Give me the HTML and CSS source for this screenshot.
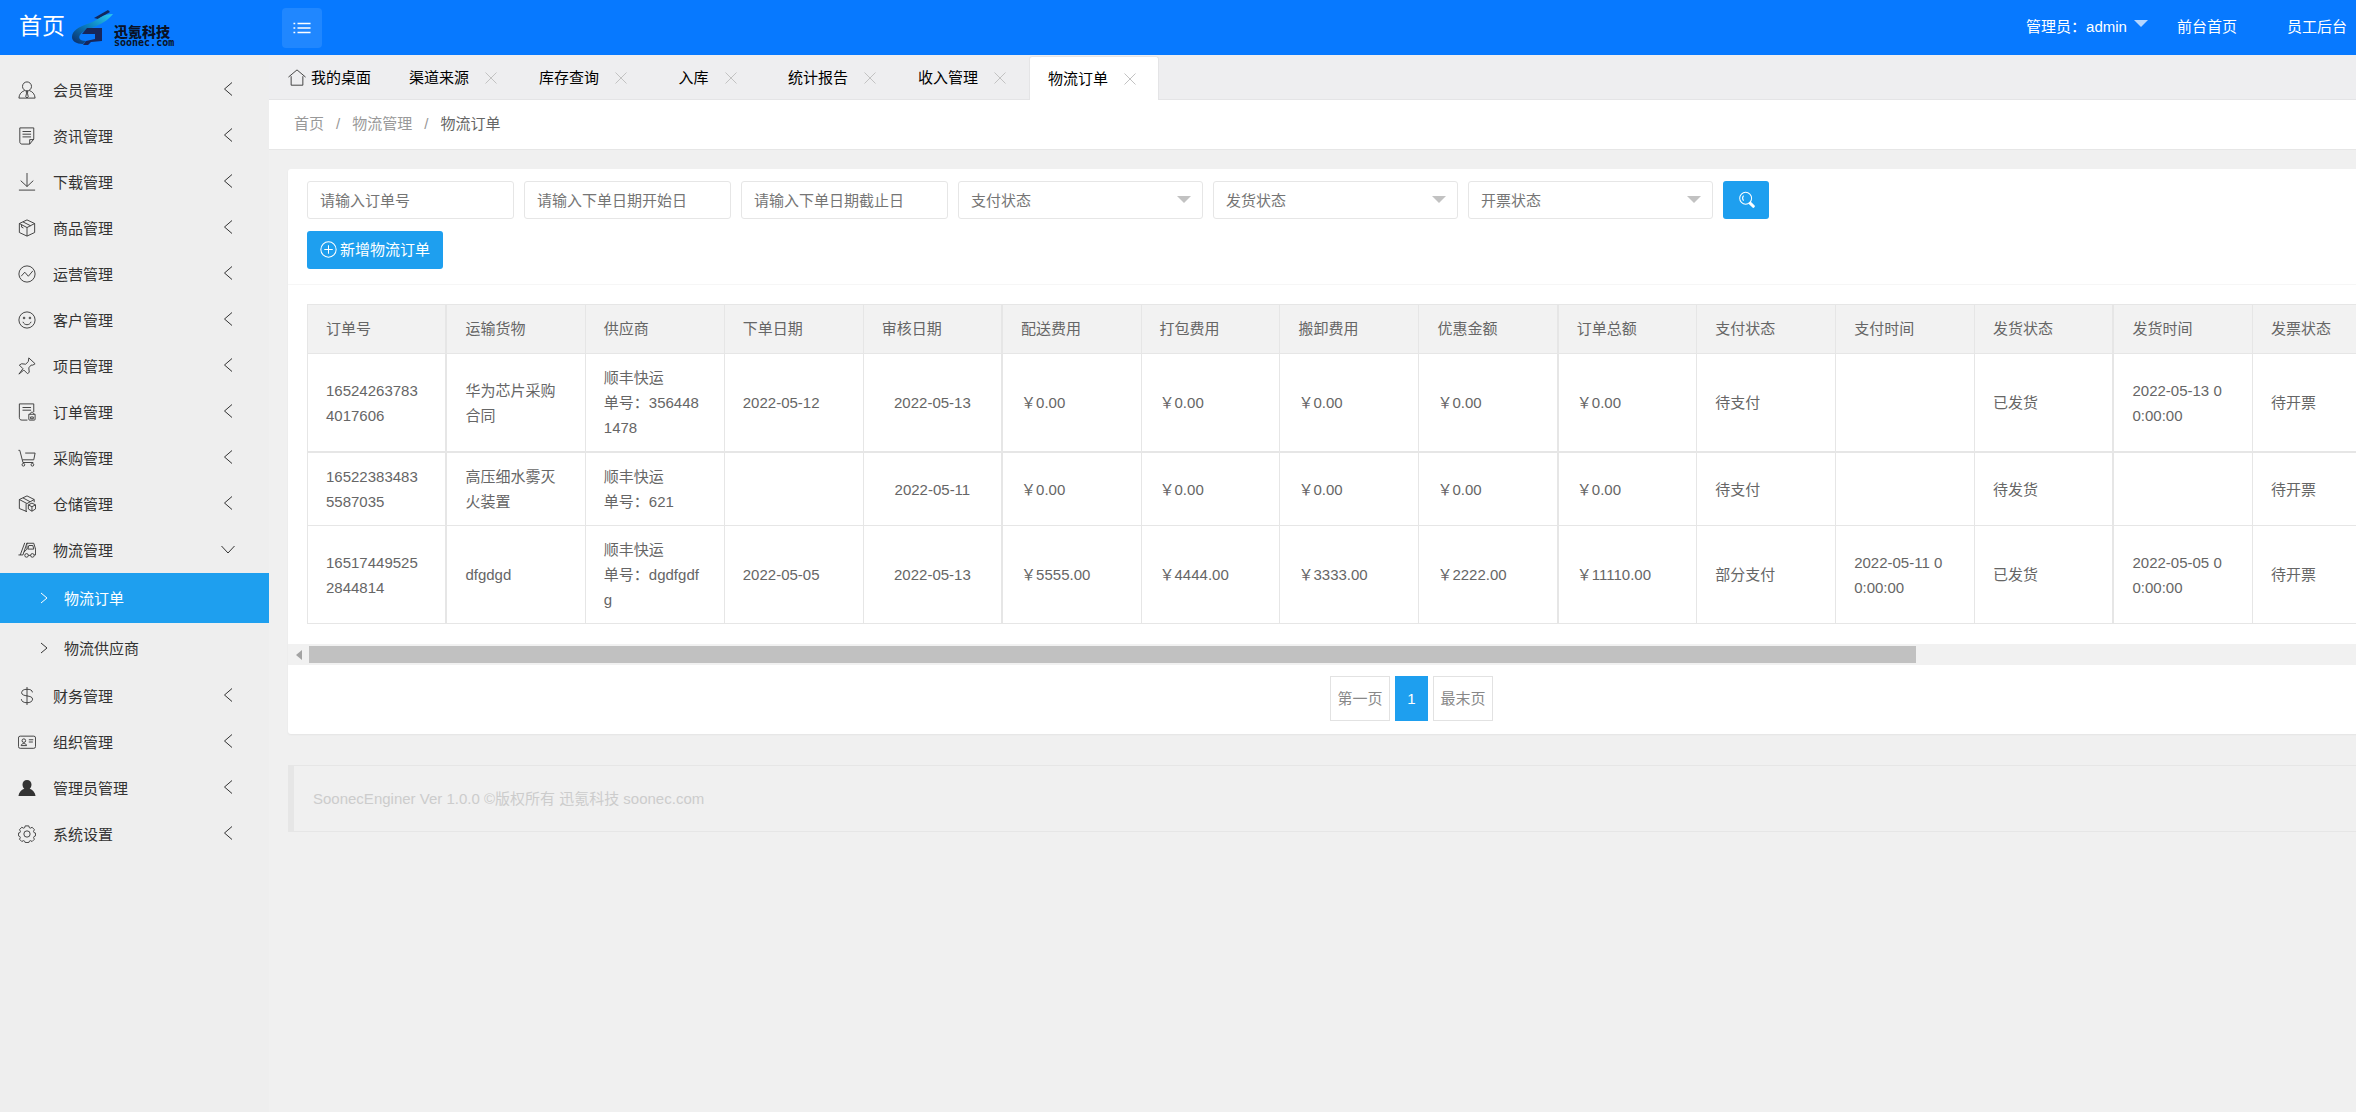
FILE: index.html
```html
<!DOCTYPE html>
<html lang="zh-CN">
<head>
    <meta charset="UTF-8">
    <meta name="viewport" content="width=device-width, initial-scale=1.0">
    <title>物流订单</title>
    <link rel="stylesheet" href="styles.css">
</head>
<body>
    <svg class="sprite" aria-hidden="true">
        <symbol id="i-member" viewBox="0 0 20 20"><circle cx="10" cy="6" r="5"/><path d="M7.4 10.6C3.6 12 1.4 14.4 1 19h18c-.4-4.600-2.600-7-6.400-8.400M9 11.500h2l-.5 2 .9 4-1.400 1.300-1.400-1.300.9-4z"/></symbol>
        <symbol id="i-news" viewBox="0 0 20 20"><path d="M2 1h15.500v12.500L13 19H4.500C3 19 2 18 2 16.500zM13 19v-5h4.500M5 5h9.500M5 8h9.500M5 11h9.500"/></symbol>
        <symbol id="i-down" viewBox="0 0 20 20"><path d="M10 0v15M3 8.500l7 6.500 7-6.500M1 19h18"/></symbol>
        <symbol id="i-box" viewBox="0 0 20 20"><path d="M10 1l8.500 4v10L10 19l-8.500-4V5zM1.500 5L10 9.500 18.500 5M10 9.500V19M5.500 3.200L14 7.500M4 6.500V9l2 1"/></symbol>
        <symbol id="i-chart" viewBox="0 0 20 20"><circle cx="10" cy="10" r="9"/><path d="M3.500 12.500L7.500 8l4 4.500 5-6"/></symbol>
        <symbol id="i-smile" viewBox="0 0 20 20"><circle cx="10" cy="10" r="9"/><path d="M5.500 12c1.500 4.300 7.500 4.300 9 0M6 7h1.500v1.500H6zM12.500 7H14v1.500h-1.500z"/></symbol>
        <symbol id="i-pin" viewBox="0 0 20 20"><path d="M12 1l7 6.500-2.500 1.500h-2l-2.500 3 .5 5-2 1.500-4-4L1 19l4.500-6L1.500 9 4 7.500l4.500.5L11.500 5z"/></symbol>
        <symbol id="i-order" viewBox="0 0 20 20"><path d="M10.500 19H4.500C2.500 19 1.500 18 1.500 16V1h16v9M5 5h9.500M5 8h9.500M12 12.500h7V18q0 1-1 1h-5q-1 0-1-1zM13.500 12.500c0-3 4-3 4 0M14 15.500h3v2h-3z"/></symbol>
        <symbol id="i-cart" viewBox="0 0 20 20"><path d="M0.500 1.500H2L5.500 15h11.500M8 4.500h11L17.500 12H5"/><circle cx="6" cy="17.500" r="1.500"/><circle cx="16" cy="17.500" r="1.500"/></symbol>
        <symbol id="i-store" viewBox="0 0 20 20"><path d="M10 18.500L1.500 15V5L10 1l8 4v3M1.500 5L10 9.500 18 5M9 9.500v9M5.500 3.200L13.500 7.500M15.500 9l4 2v4.500l-4 2.500-4-2.500V11zM11.500 11l4 2 4-2M15.500 13v5"/></symbol>
        <symbol id="i-truck" viewBox="0 0 20 20"><path d="M7.500 2L2.500 15.500M10 2L5.500 15.500H0.500M10 4V2.500h7.500L19.500 9v6.500h-1.500M10 5v4L6.500 12.500M12 5h4.500l1 4h-6.500zM11.500 16h2.500"/><circle cx="9.500" cy="16" r="2"/><circle cx="16" cy="16" r="2"/></symbol>
        <symbol id="i-money" viewBox="0 0 20 20"><path d="M16 6c0-2.500-2.500-3.500-6-3.500S4 4 4 6.300c0 5 12.200 2.200 12.200 7.200 0 2.500-2.700 4-6.200 4s-6.300-1.500-6.300-4M10 0v20"/></symbol>
        <symbol id="i-card" viewBox="0 0 20 20"><rect x="0.500" y="3.500" width="19" height="13.500" rx="2"/><path d="M3.500 14c0-3 6-3 6 0zM12 7.500h5M12 10h4.500"/><circle cx="6.500" cy="8.500" r="2"/></symbol>
        <symbol id="i-user" viewBox="0 0 20 20"><path d="M10 1c3 0 5 2.200 5 5 0 2-.8 3.800-2 4.800 3.500 1.200 6 4 6.500 8.200H.5C1 14.800 3.500 12 7 10.800 5.800 9.800 5 8 5 6c0-2.800 2-5 5-5z" fill="currentColor" stroke="none"/></symbol>
        <symbol id="i-gear" viewBox="0 0 20 20"><circle cx="10" cy="10" r="3.500"/><path d="M8 1h4l.6 2 1.200.500L15.700 2.500l2.500 2.700-1 1.900.6 1.400L19.500 9v3l-1.700.8-.5 1.200.9 1.800-2.500 2.500-1.900-.9-1.200.6L12 19.500H8l-.6-1.500-1.300-.6-1.900.9-2.500-2.500.9-1.800-.5-1.200L.5 12V9l1.700-.5.5-1.400-1-1.900 2.500-2.700 1.900 1L7.400 3z"/></symbol>
        <symbol id="i-left" viewBox="0 0 14 14"><path d="M11 0.500L3.500 7l7.500 6.500"/></symbol>
        <symbol id="i-open" viewBox="0 0 14 14"><path d="M0.500 4L7 11l6.500-7"/></symbol>
        <symbol id="i-right" viewBox="0 0 14 14"><path d="M4 2l6 5-6 5"/></symbol>
        <symbol id="i-close" viewBox="0 0 20 20"><path d="M4.500 4.500l11 11M15.500 4.500l-11 11"/></symbol>
        <symbol id="i-home" viewBox="0 0 20 20"><path d="M0.500 9L10 1l9.500 8M3.500 8v10h13V8"/></symbol>
        <symbol id="i-add" viewBox="0 0 20 20"><circle cx="10" cy="10" r="9"/><path d="M10 5v10M5 10h10"/></symbol>
        <symbol id="i-search" viewBox="0 0 20 20"><circle cx="9" cy="8.500" r="7"/><path d="M6.500 5.500c-1.500 1.800-1.500 4 0 6"/><path d="M14.500 14.500l3.500 3.500" stroke-width="3.500" stroke-linecap="round"/></symbol>
        <symbol id="i-list" viewBox="0 0 20 20"><path d="M0.500 5h2M5 5h14.500M0.500 10h2M5 10h14.500M0.500 15h2M5 15h14.500"/></symbol>
    </svg>

    <header class="header">
        <a class="logo" href="#">
            <span class="logo-title">首页</span>
            <svg class="logo-mark" viewBox="0 0 42 36" aria-hidden="true">
                <defs>
                    <linearGradient id="swoosh" x1="0" y1="1" x2="1" y2="0">
                        <stop offset="0" stop-color="#0b2a66"/>
                        <stop offset="0.500" stop-color="#0a7fc0"/>
                        <stop offset="1" stop-color="#2ccbf0"/>
                    </linearGradient>
                </defs>
                <path d="M22 8L36 0l2 2-12 7z" fill="#12285c"/>
                <path d="M41 4C30 4 28 9 18 13 6 17 0 21 0 27c0 4 4 7 11 7l3-3c-6 0-8-3-6-6C13 18 31 17 41 4z" fill="url(#swoosh)"/>
                <path d="M15 18h15v13l-11 1-3 3h-5l3-4 9-2v-5H10z" fill="#17265a"/>
            </svg>
            <span class="logo-name"><b>迅氪科技</b><small>soonec.com</small></span>
        </a>
        <button class="toggle" type="button" aria-label="折叠菜单"><svg class="icon"><use href="#i-list"/></svg></button>
        <nav class="top-nav">
            <a class="admin" href="#">管理员：admin<span class="caret"></span></a>
            <a href="#">前台首页</a>
            <a href="#">员工后台</a>
        </nav>
    </header>

    <div class="layout">
        <nav class="sidebar">
            <a class="item" href="#"><svg class="icon"><use href="#i-member"/></svg>会员管理<svg class="arrow"><use href="#i-left"/></svg></a>
            <a class="item" href="#"><svg class="icon"><use href="#i-news"/></svg>资讯管理<svg class="arrow"><use href="#i-left"/></svg></a>
            <a class="item" href="#"><svg class="icon"><use href="#i-down"/></svg>下载管理<svg class="arrow"><use href="#i-left"/></svg></a>
            <a class="item" href="#"><svg class="icon"><use href="#i-box"/></svg>商品管理<svg class="arrow"><use href="#i-left"/></svg></a>
            <a class="item" href="#"><svg class="icon"><use href="#i-chart"/></svg>运营管理<svg class="arrow"><use href="#i-left"/></svg></a>
            <a class="item" href="#"><svg class="icon"><use href="#i-smile"/></svg>客户管理<svg class="arrow"><use href="#i-left"/></svg></a>
            <a class="item" href="#"><svg class="icon"><use href="#i-pin"/></svg>项目管理<svg class="arrow"><use href="#i-left"/></svg></a>
            <a class="item" href="#"><svg class="icon"><use href="#i-order"/></svg>订单管理<svg class="arrow"><use href="#i-left"/></svg></a>
            <a class="item" href="#"><svg class="icon"><use href="#i-cart"/></svg>采购管理<svg class="arrow"><use href="#i-left"/></svg></a>
            <a class="item" href="#"><svg class="icon"><use href="#i-store"/></svg>仓储管理<svg class="arrow"><use href="#i-left"/></svg></a>
            <a class="item" href="#"><svg class="icon"><use href="#i-truck"/></svg>物流管理<svg class="arrow"><use href="#i-open"/></svg></a>
            <a class="sub active" href="#"><svg class="arrow"><use href="#i-right"/></svg>物流订单</a>
            <a class="sub" href="#"><svg class="arrow"><use href="#i-right"/></svg>物流供应商</a>
            <a class="item" href="#"><svg class="icon"><use href="#i-money"/></svg>财务管理<svg class="arrow"><use href="#i-left"/></svg></a>
            <a class="item" href="#"><svg class="icon"><use href="#i-card"/></svg>组织管理<svg class="arrow"><use href="#i-left"/></svg></a>
            <a class="item" href="#"><svg class="icon"><use href="#i-user"/></svg>管理员管理<svg class="arrow"><use href="#i-left"/></svg></a>
            <a class="item" href="#"><svg class="icon"><use href="#i-gear"/></svg>系统设置<svg class="arrow"><use href="#i-left"/></svg></a>
        </nav>

        <main class="main">
            <div class="tabs">
                <div class="tab home"><svg class="icon"><use href="#i-home"/></svg><a href="#">我的桌面</a></div>
                <div class="tab"><a href="#">渠道来源</a><button type="button" aria-label="关闭"><svg><use href="#i-close"/></svg></button></div>
                <div class="tab"><a href="#">库存查询</a><button type="button" aria-label="关闭"><svg><use href="#i-close"/></svg></button></div>
                <div class="tab"><a href="#">入库</a><button type="button" aria-label="关闭"><svg><use href="#i-close"/></svg></button></div>
                <div class="tab"><a href="#">统计报告</a><button type="button" aria-label="关闭"><svg><use href="#i-close"/></svg></button></div>
                <div class="tab"><a href="#">收入管理</a><button type="button" aria-label="关闭"><svg><use href="#i-close"/></svg></button></div>
                <div class="tab current"><a href="#">物流订单</a><button type="button" aria-label="关闭"><svg><use href="#i-close"/></svg></button></div>
            </div>

            <div class="breadcrumb">
                <a href="#">首页</a><span>/</span><a href="#">物流管理</a><span>/</span><a class="here" href="#">物流订单</a>
            </div>

            <div class="content">
                <div class="card">
                    <div class="card-header">
                        <form class="search">
                            <input type="text" aria-label="订单号" placeholder="请输入订单号">
                            <input type="text" aria-label="下单日期开始日" placeholder="请输入下单日期开始日">
                            <input type="text" aria-label="下单日期截止日" placeholder="请输入下单日期截止日">
                            <div class="select"><select aria-label="支付状态"><option>支付状态</option></select></div>
                            <div class="select"><select aria-label="发货状态"><option>发货状态</option></select></div>
                            <div class="select"><select aria-label="开票状态"><option>开票状态</option></select></div>
                            <button class="btn btn-search" type="button" aria-label="搜索"><svg class="icon"><use href="#i-search"/></svg></button>
                        </form>
                        <button class="btn" type="button"><svg class="icon"><use href="#i-add"/></svg>新增物流订单</button>
                    </div>

                    <div class="table-wrap">
                        <table>
                            <thead>
                                <tr>
                                    <th>订单号</th><th>运输货物</th><th>供应商</th><th>下单日期</th><th>审核日期</th>
                                    <th>配送费用</th><th>打包费用</th><th>搬卸费用</th><th>优惠金额</th><th>订单总额</th>
                                    <th>支付状态</th><th>支付时间</th><th>发货状态</th><th>发货时间</th><th>发票状态</th>
                                </tr>
                            </thead>
                            <tbody>
                                <tr>
                                    <td>165242637834017606</td><td>华为芯片采购合同</td><td>顺丰快运<br>单号：3564481478</td><td>2022-05-12</td><td class="center">2022-05-13</td>
                                    <td>￥0.00</td><td>￥0.00</td><td>￥0.00</td><td>￥0.00</td><td>￥0.00</td>
                                    <td>待支付</td><td></td><td>已发货</td><td>2022-05-13 00:00:00</td><td>待开票</td>
                                </tr>
                                <tr>
                                    <td>165223834835587035</td><td>高压细水雾灭火装置</td><td>顺丰快运<br>单号：621</td><td></td><td class="center">2022-05-11</td>
                                    <td>￥0.00</td><td>￥0.00</td><td>￥0.00</td><td>￥0.00</td><td>￥0.00</td>
                                    <td>待支付</td><td></td><td>待发货</td><td></td><td>待开票</td>
                                </tr>
                                <tr>
                                    <td>165174495252844814</td><td>dfgdgd</td><td>顺丰快运<br>单号：dgdfgdfg</td><td>2022-05-05</td><td class="center">2022-05-13</td>
                                    <td>￥5555.00</td><td>￥4444.00</td><td>￥3333.00</td><td>￥2222.00</td><td>￥11110.00</td>
                                    <td>部分支付</td><td>2022-05-11 00:00:00</td><td>已发货</td><td>2022-05-05 00:00:00</td><td>待开票</td>
                                </tr>
                            </tbody>
                        </table>
                    </div>
                    <div class="scrollbar"><span class="scroll-left"></span><span class="thumb"></span></div>

                    <div class="pages">
                        <a href="#">第一页</a>
                        <a class="on" href="#">1</a>
                        <a href="#">最末页</a>
                    </div>
                </div>

                <footer class="copyright">SoonecEnginer Ver 1.0.0 ©版权所有 迅氪科技 soonec.com</footer>
            </div>
        </main>
    </div>
</body>
</html>
```

FILE: styles.css
```css
* {
    box-sizing: border-box;
}
body {
    margin: 0;
    min-height: 100vh;
    display: flex;
    flex-direction: column;
    overflow-x: hidden;
    background-color: #f0f0f0;
    font-family: "Liberation Sans", "Noto Sans CJK SC", sans-serif;
    font-size: 15px;
    line-height: 25px;
    color: #666;
}
a {
    color: inherit;
    text-decoration: none;
}
button, input, select {
    font: inherit;
}
svg {
    fill: none;
    stroke: currentColor;
    stroke-width: 1;
}
.sprite {
    display: none;
}
.icon {
    width: 18px;
    height: 18px;
    flex-shrink: 0;
}

/* header */
.header {
    display: flex;
    align-items: center;
    height: 55px;
    padding-right: 9px;
    background-color: #0779ff;
    color: #fff;
}
.logo {
    display: flex;
    align-items: center;
    width: 282px;
    padding-left: 19px;
}
.logo-title {
    padding-bottom: 3px;
    font-size: 23px;
}
.logo-mark {
    width: 42px;
    height: 36px;
    margin-left: 7px;
    stroke: none;
}
.logo-name {
    display: flex;
    flex-direction: column;
    padding-top: 16px;
    color: #0a1226;
}
.logo-name b {
    font-size: 14px;
    font-weight: 900;
    line-height: 14px;
}
.logo-name small {
    font-family: "DejaVu Sans Mono", monospace;
    font-size: 10px;
    font-weight: bold;
    line-height: 8px;
}
.toggle {
    display: flex;
    align-items: center;
    justify-content: center;
    width: 40px;
    height: 40px;
    border: none;
    border-radius: 4px;
    background-color: #2087ff;
    color: #fff;
    cursor: pointer;
}
.toggle .icon {
    stroke-width: 1.5;
}
.top-nav {
    display: flex;
    gap: 50px;
    margin-left: auto;
    padding-bottom: 2px;
}
.admin {
    display: flex;
    gap: 7px;
    margin-right: -21px;
}
.caret {
    height: 7px;
    margin-top: 6px;
    border: 7px solid transparent;
    border-top-color: #b5d7ff;
    border-bottom: none;
}

/* sidebar */
.layout {
    display: flex;
    flex: 1;
    width: calc(100% + 198px);
}
.sidebar {
    width: 269px;
    flex-shrink: 0;
    padding-top: 12px;
    background-color: #eee;
    color: #333;
}
.item {
    display: flex;
    align-items: center;
    height: 46px;
    padding: 0 34px 0 18px;
}
.item .icon {
    margin-right: 17px;
}
.arrow {
    width: 14px;
    height: 14px;
}
.item .arrow {
    margin: 0 0 2px auto;
}
.sub {
    display: flex;
    align-items: center;
    gap: 13px;
    height: 50px;
    padding-left: 37px;
}
.sub.active {
    background-color: #1e9fef;
    color: #fff;
}

/* tabs and breadcrumb */
.main {
    flex: 1;
    min-width: 0;
}
.tabs {
    display: flex;
    height: 45px;
    padding-top: 1px;
    border-bottom: 1px solid #e4e4e6;
    background-color: #eeeef0;
    color: #000;
}
.tab {
    display: flex;
    align-items: center;
    justify-content: center;
    gap: 12px;
    min-width: 119px;
    height: 43px;
    padding: 0 19px;
}
.tab.home {
    gap: 5px;
}
.home .icon {
    color: #333;
}
.tab.current {
    height: 44px;
    border: 1px solid #e4e4e6;
    border-bottom: none;
    border-radius: 3px 3px 0 0;
    padding: 0 18px;
    background-color: #fff;
}
.tab button {
    width: 20px;
    height: 20px;
    padding: 0;
    border: none;
    background: none;
    color: #c2c2c2;
    cursor: pointer;
}
.tab button svg {
    display: block;
    width: 20px;
    height: 20px;
}
.breadcrumb {
    display: flex;
    align-items: center;
    gap: 12px;
    height: 50px;
    padding: 0 25px 2px;
    border-bottom: 1px solid #e6e6e6;
    background-color: #fff;
    color: #999;
}
.breadcrumb .here {
    color: #666;
}

/* content */
.content {
    padding: 19px;
}
.card {
    border-radius: 3px;
    background-color: #fff;
    box-shadow: 0 1px 2px rgba(0, 0, 0, 0.05);
}
.card-header {
    display: flex;
    flex-direction: column;
    align-items: flex-start;
    gap: 12px;
    padding: 12px 19px 15px;
    border-bottom: 1px solid #f6f6f6;
}
.search {
    display: flex;
    gap: 10px;
}
.search input, .search select {
    height: 38px;
    padding: 0 12px;
    border: 1px solid #e6e6e6;
    border-radius: 3px;
    background-color: #fff;
    color: #757575;
}
.search input {
    width: 207px;
}
.select {
    position: relative;
}
.select::after {
    content: "";
    position: absolute;
    top: 15px;
    right: 12px;
    border: 7px solid transparent;
    border-top-color: #c2c2c2;
    border-bottom: none;
    pointer-events: none;
}
.search select {
    width: 245px;
    appearance: none;
}
.btn {
    display: flex;
    align-items: center;
    justify-content: center;
    gap: 3px;
    height: 38px;
    padding: 0 13px 2px;
    border: none;
    border-radius: 3px;
    background-color: #1e9fef;
    color: #fff;
    cursor: pointer;
}
.btn .icon {
    width: 17px;
    height: 17px;
    stroke-width: 1.2;
}
.btn-search {
    width: 46px;
}
.table-wrap {
    overflow: hidden;
    padding: 19px 19px 20px;
}
table {
    width: 2085px;
    table-layout: fixed;
    border-collapse: collapse;
    word-break: break-all;
}
th, td {
    padding: 11px 24px 11px 18px;
    border: 1px solid #e6e6e6;
    text-align: left;
    font-weight: normal;
}
th {
    padding-bottom: 12px;
    background-color: #f2f2f2;
}
th:nth-child(4n + 1), td:nth-child(4n + 1) {
    border-right-width: 2px;
}
tbody tr:first-child td {
    border-bottom-width: 2px;
}
td.center {
    padding-right: 18px;
    text-align: center;
}
.scrollbar {
    display: flex;
    align-items: center;
    height: 21px;
    background-color: #f1f1f1;
}
.scroll-left {
    margin: 0 7px 0 8px;
    border: 5px solid transparent;
    border-left: none;
    border-right: 6px solid #a3a3a3;
}
.thumb {
    width: 71.500%;
    height: 17px;
    background-color: #c1c1c1;
}
.pages {
    display: flex;
    justify-content: center;
    gap: 5px;
    padding: 11px 0 13px;
}
.pages a {
    min-width: 60px;
    padding: 9px 6px;
    border: 1px solid #e2e2e2;
    text-align: center;
    color: #888;
}
.pages .on {
    min-width: 33px;
    border-color: #1e9fef;
    background-color: #1e9fef;
    color: #fff;
}
.copyright {
    margin-top: 31px;
    padding: 20px 19px;
    border: 1px solid #e6e6e6;
    border-left-width: 6px;
    color: #ccc;
}
```
